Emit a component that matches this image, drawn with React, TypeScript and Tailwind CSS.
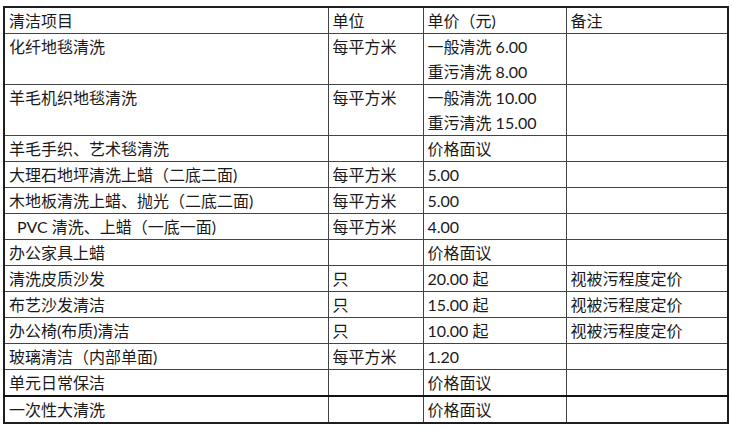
import React from 'react';

type Row = {
  item: string;
  unit?: string;
  price: string[];
  note?: string;
  h: string;
  thickTop?: boolean;
  indent?: boolean;
};

const rows: Row[] = [
  { item: '化纤地毯清洗', unit: '每平方米', price: ['一般清洗 6.00', '重污清洗 8.00'], h: 'h-[50px]' },
  { item: '羊毛机织地毯清洗', unit: '每平方米', price: ['一般清洗 10.00', '重污清洗 15.00'], h: 'h-[51px]' },
  { item: '羊毛手织、艺术毯清洗', price: ['价格面议'], h: 'h-[26px]' },
  { item: '大理石地坪清洗上蜡（二底二面)', unit: '每平方米', price: ['5.00'], h: 'h-[26px]' },
  { item: '木地板清洗上蜡、抛光（二底二面)', unit: '每平方米', price: ['5.00'], h: 'h-[26px]' },
  { item: 'PVC 清洗、上蜡（一底一面)', unit: '每平方米', price: ['4.00'], h: 'h-[26px]', indent: true },
  { item: '办公家具上蜡', price: ['价格面议'], h: 'h-[26px]' },
  { item: '清洗皮质沙发', unit: '只', price: ['20.00 起'], note: '视被污程度定价', h: 'h-[26px]' },
  { item: '布艺沙发清洁', unit: '只', price: ['15.00 起'], note: '视被污程度定价', h: 'h-[26px]' },
  { item: '办公椅(布质)清洁', unit: '只', price: ['10.00 起'], note: '视被污程度定价', h: 'h-[26px]' },
  { item: '玻璃清洁（内部单面)', unit: '每平方米', price: ['1.20'], h: 'h-[26px]' },
  { item: '单元日常保洁', price: ['价格面议'], h: 'h-[26px]' },
  { item: '一次性大清洗', price: ['价格面议'], h: 'h-[25px]', thickTop: true },
];

const cell = 'border border-[#444] px-[4px] py-0 align-top leading-[25px] text-left font-normal';

export default function App() {
  return (
    <div className="w-[732px] h-[430px] bg-white pt-[6px] pl-[3px] overflow-hidden">
      <table
        className="table-fixed border-collapse w-[724px] border-2 border-[#1e1e1e] text-[16px] text-[#1a1a1a]"
        style={{ fontFamily: 'Lato, "Noto Sans CJK SC", sans-serif' }}
      >
        <colgroup>
          <col className="w-[324px]" />
          <col className="w-[95px]" />
          <col className="w-[143px]" />
          <col className="w-[162px]" />
        </colgroup>
        <thead>
          <tr className="h-[26px]">
            <th className={cell}>清洁项目</th>
            <th className={cell}>单位</th>
            <th className={cell}>单价（元)</th>
            <th className={cell}>备注</th>
          </tr>
        </thead>
        <tbody>
          {rows.map((r, i) => (
            <tr key={i} className={`${r.h} ${r.thickTop ? 'border-t-2 border-t-[#111]' : ''}`}>
              <td className={`${cell} ${r.indent ? 'pl-[12px]' : ''}`}>{r.item}</td>
              <td className={cell}>{r.unit}</td>
              <td className={cell}>
                {r.price.map((p, j) => (
                  <div key={j}>{p}</div>
                ))}
              </td>
              <td className={cell}>{r.note}</td>
            </tr>
          ))}
        </tbody>
      </table>
    </div>
  );
}
